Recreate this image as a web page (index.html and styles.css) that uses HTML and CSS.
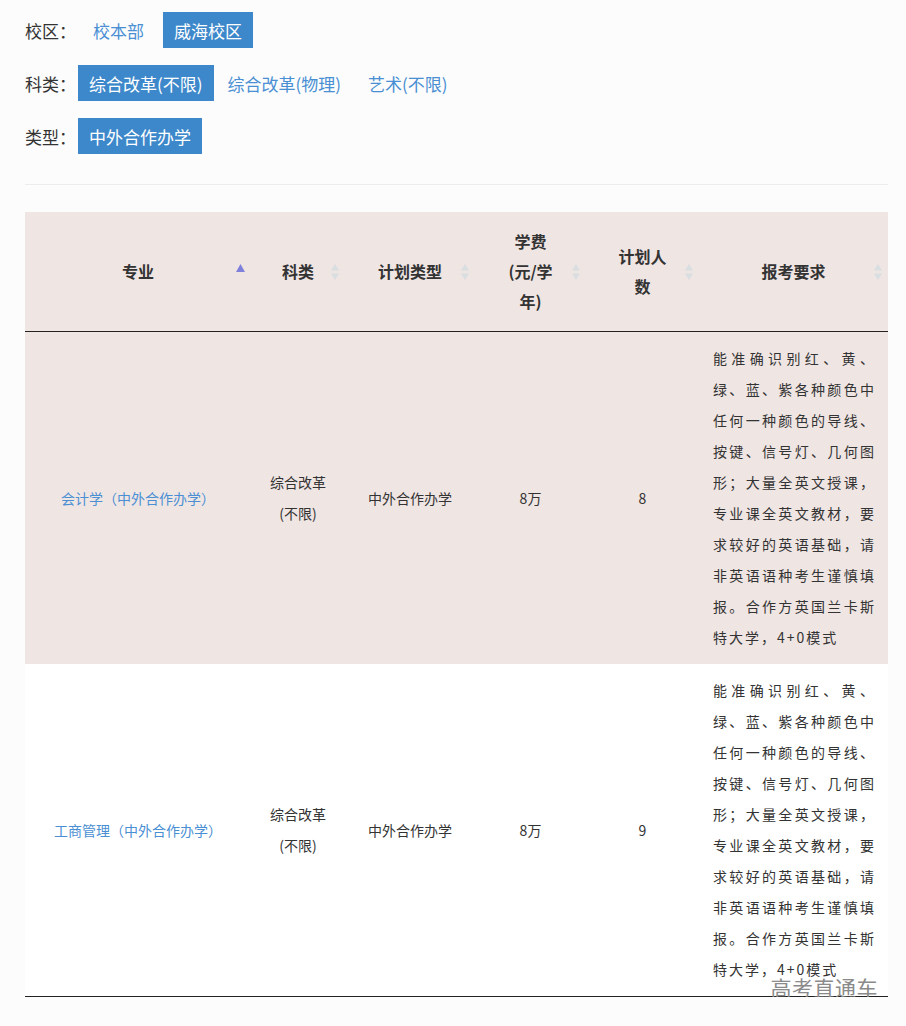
FILE: index.html
```html
<!DOCTYPE html>
<html lang="zh-CN">
<head>
<meta charset="utf-8">
<title>招生计划</title>
<link rel="stylesheet" href="styles.css">
</head>
<body>
<div class="page">
  <div class="filters">
    <div class="filter-row">
      <span class="filter-label">校区：</span>
      <a class="opt">校本部</a>
      <a class="opt active">威海校区</a>
    </div>
    <div class="filter-row">
      <span class="filter-label">科类：</span>
      <a class="opt active">综合改革(不限)</a>
      <a class="opt">综合改革(物理)</a>
      <a class="opt">艺术(不限)</a>
    </div>
    <div class="filter-row">
      <span class="filter-label">类型：</span>
      <a class="opt active">中外合作办学</a>
    </div>
  </div>
  <hr class="divider">
  <div class="table-wrap">
    <table class="plan">
      <colgroup>
        <col class="c1"><col class="c2"><col class="c3"><col class="c4"><col class="c5"><col class="c6">
      </colgroup>
      <thead>
        <tr>
          <th>专业<span class="sort asc"><svg width="9" height="8" viewBox="0 0 9 8"><path d="M4.5 0 L9 8 L0 8 Z" fill="#7f7fdc"/></svg></span></th>
          <th>科类<span class="sort"><svg width="8" height="18" viewBox="0 0 8 18"><path d="M4 1 L8 7.5 L0 7.5 Z M4 17 L8 10.5 L0 10.5 Z" fill="#d9dee1"/></svg></span></th>
          <th>计划类型<span class="sort"><svg width="8" height="18" viewBox="0 0 8 18"><path d="M4 1 L8 7.5 L0 7.5 Z M4 17 L8 10.5 L0 10.5 Z" fill="#d9dee1"/></svg></span></th>
          <th>学费<br>(元/学<br>年)<span class="sort"><svg width="8" height="18" viewBox="0 0 8 18"><path d="M4 1 L8 7.5 L0 7.5 Z M4 17 L8 10.5 L0 10.5 Z" fill="#d9dee1"/></svg></span></th>
          <th>计划人<br>数<span class="sort"><svg width="8" height="18" viewBox="0 0 8 18"><path d="M4 1 L8 7.5 L0 7.5 Z M4 17 L8 10.5 L0 10.5 Z" fill="#d9dee1"/></svg></span></th>
          <th>报考要求<span class="sort"><svg width="8" height="18" viewBox="0 0 8 18"><path d="M4 1 L8 7.5 L0 7.5 Z M4 17 L8 10.5 L0 10.5 Z" fill="#d9dee1"/></svg></span></th>
        </tr>
      </thead>
      <tbody>
        <tr class="odd">
          <td><a class="major">会计学（中外合作办学）</a></td>
          <td>综合改革(不限)</td>
          <td>中外合作办学</td>
          <td>8万</td>
          <td>8</td>
          <td class="req">能准确识别红、黄、绿、蓝、紫各种颜色中任何一种颜色的导线、按键、信号灯、几何图形；大量全英文授课，专业课全英文教材，要求较好的英语基础，请非英语语种考生谨慎填报。合作方英国兰卡斯特大学，4+0模式</td>
        </tr>
        <tr class="even">
          <td><a class="major">工商管理（中外合作办学）</a></td>
          <td>综合改革(不限)</td>
          <td>中外合作办学</td>
          <td>8万</td>
          <td>9</td>
          <td class="req">能准确识别红、黄、绿、蓝、紫各种颜色中任何一种颜色的导线、按键、信号灯、几何图形；大量全英文授课，专业课全英文教材，要求较好的英语基础，请非英语语种考生谨慎填报。合作方英国兰卡斯特大学，4+0模式</td>
        </tr>
      </tbody>
    </table>
    <div class="watermark">高考直通车</div>
  </div>
</div>
</body>
</html>
```

FILE: styles.css
```css
html, body {
  margin: 0;
  padding: 0;
  background: #fcfcfc;
}
body {
  font-family: "Noto Sans CJK SC", "Noto Sans", sans-serif;
  color: #333;
}
.page {
  width: 863px;
  padding: 12px 0 0 25px;
}
.filters {
  display: flex;
  flex-direction: column;
  gap: 17px;
}
.filter-row {
  display: flex;
  align-items: center;
  height: 36px;
  font-size: 17px;
}
.filter-label {
  width: 53px;
  color: #333;
}
.opt {
  display: inline-flex;
  align-items: center;
  height: 36px;
  padding: 0 13px;
  margin-right: 1px;
  color: #4a8fd3;
  cursor: pointer;
}
.opt.active {
  padding: 0 11px;
  background: #3d88ca;
  color: #fff;
}
.filter-row:first-child .opt:first-of-type {
  margin-left: 2px;
  margin-right: 6px;
}
.divider {
  border: 0;
  border-top: 1px solid #ececec;
  margin: 30px 0 27px;
}
.table-wrap {
  position: relative;
}
.plan {
  width: 863px;
  table-layout: fixed;
  border-collapse: collapse;
  font-size: 14px;
}
.c1 { width: 226px; }
.c2 { width: 94px; }
.c3 { width: 130px; }
.c4 { width: 111px; }
.c5 { width: 113px; }
.c6 { width: 189px; }
.plan thead th {
  position: relative;
  background: #efe5e3;
  font-size: 16px;
  font-weight: bold;
  line-height: 30px;
  padding: 14px 10px 15px;
  text-align: center;
  border-bottom: 1px solid #222;
  color: #333;
}
.sort {
  position: absolute;
  right: 6px;
  top: 50%;
  transform: translateY(-50%);
  display: flex;
}
.sort.asc {
  margin-top: -4px;
}
.plan td {
  padding: 11px 10px;
  text-align: center;
  line-height: 31px;
  vertical-align: middle;
}
.plan tr.odd td {
  background: #efe5e3;
}
.plan tr.even td {
  background: #fff;
}
.plan tbody tr:last-child td {
  border-bottom: 1px solid #222;
}
.major {
  color: #4a8fd3;
  cursor: pointer;
}
.plan td.req {
  text-align: justify;
  letter-spacing: 2px;
  padding: 11px 12px 11px 14px;
}
.watermark {
  position: absolute;
  right: 10px;
  bottom: -1px;
  font-size: 21px;
  line-height: 1;
  color: #8a8a8a;
  letter-spacing: 0.5px;
}
```
